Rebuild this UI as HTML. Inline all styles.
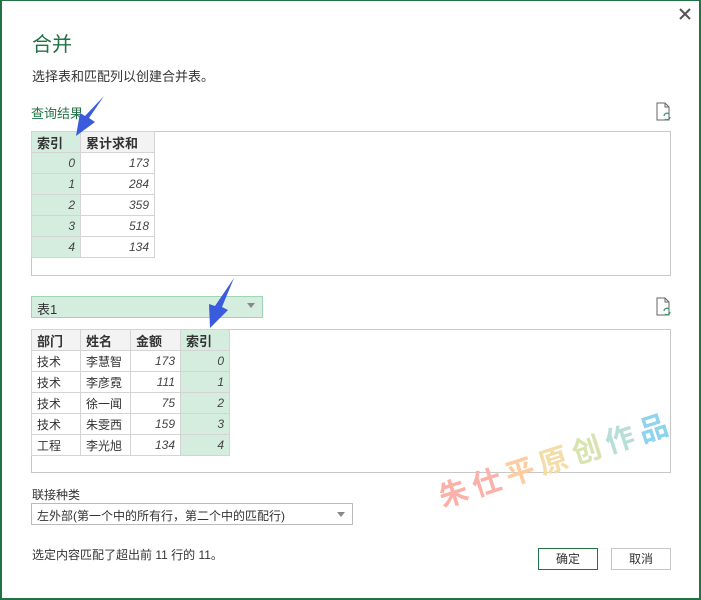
<!DOCTYPE html>
<html><head><meta charset="utf-8"><style>
*{margin:0;padding:0;box-sizing:border-box}
body{width:701px;height:600px;background:#fff;font-family:"Liberation Sans","Noto Sans CJK SC",sans-serif;font-size:12px;color:#333;position:relative;overflow:hidden}
.win{position:absolute;left:0;top:0;width:701px;height:600px;border:2px solid #217346;border-top-width:1px}
.a{position:absolute;white-space:nowrap}
table{border-collapse:collapse;position:absolute}
td{border:1px solid #d4d4d4;height:21px;padding:0 5px;font-size:12px}
th{border:1px solid #d4d4d4;height:21px;padding:0 5px;text-align:left;font-weight:bold;background:#f3f3f3;font-size:13px}
.g{background:#d5eddf}
.n{text-align:right;font-style:italic;color:#444}
.box{position:absolute;border:1px solid #c8c8c8}
.btn{position:absolute;height:22px;border:1px solid #c6c6c6;text-align:center;line-height:20px;font-size:12px}
</style></head><body>
<div class="win"></div>
<svg class="a" style="left:679px;top:8px" width="12" height="12"><path d="M1 1L11 11M11 1L1 11" stroke="#555" stroke-width="2"/></svg>
<div class="a" style="left:32px;top:28px;font-size:20px;color:#217346">合并</div>
<div class="a" style="left:32px;top:66px;font-size:13px">选择表和匹配列以创建合并表。</div>
<div class="a" style="left:31px;top:103px;font-size:13px;color:#217346">查询结果</div>
<svg class="a" style="left:655px;top:102px" width="20" height="20"><path d="M2 1h8l4 4v13H2z M10 1v4h4" fill="none" stroke="#666" stroke-width="1"/><path d="M9 14a3 3 0 0 1 5-2M15 15a3 3 0 0 1-5 2" fill="none" stroke="#3a9a6a" stroke-width="1.3"/></svg>
<svg class="a" style="left:655px;top:297px" width="20" height="20"><path d="M2 1h8l4 4v13H2z M10 1v4h4" fill="none" stroke="#666" stroke-width="1"/><path d="M9 14a3 3 0 0 1 5-2M15 15a3 3 0 0 1-5 2" fill="none" stroke="#3a9a6a" stroke-width="1.3"/></svg>
<div class="box" style="left:31px;top:131px;width:640px;height:145px"></div>
<table style="left:31px;top:131px">
<tr><th class="g" style="width:49px">索引</th><th style="width:74px">累计求和</th></tr>
<tr><td class="g n">0</td><td class="n">173</td></tr>
<tr><td class="g n">1</td><td class="n">284</td></tr>
<tr><td class="g n">2</td><td class="n">359</td></tr>
<tr><td class="g n">3</td><td class="n">518</td></tr>
<tr><td class="g n">4</td><td class="n">134</td></tr>
</table>
<div class="a" style="left:31px;top:296px;width:232px;height:22px;background:#d5eddf;border:1px solid #9fd5b5;padding:2px 5px;font-size:13px">表1</div>
<div class="a" style="left:247px;top:303px;width:0;height:0;border-left:4px solid transparent;border-right:4px solid transparent;border-top:5px solid #888"></div>
<div class="box" style="left:31px;top:329px;width:640px;height:144px"></div>
<table style="left:31px;top:329px">
<tr><th style="width:49px">部门</th><th style="width:50px">姓名</th><th style="width:50px">金额</th><th class="g" style="width:49px">索引</th></tr>
<tr><td>技术</td><td>李慧智</td><td class="n">173</td><td class="g n">0</td></tr>
<tr><td>技术</td><td>李彦霓</td><td class="n">111</td><td class="g n">1</td></tr>
<tr><td>技术</td><td>徐一闻</td><td class="n">75</td><td class="g n">2</td></tr>
<tr><td>技术</td><td>朱雯西</td><td class="n">159</td><td class="g n">3</td></tr>
<tr><td>工程</td><td>李光旭</td><td class="n">134</td><td class="g n">4</td></tr>
</table>
<div class="a" style="left:32px;top:486px;font-size:12px">联接种类</div>
<div class="a" style="left:31px;top:503px;width:322px;height:22px;border:1px solid #bbb;padding:3px 5px;font-size:12px">左外部(第一个中的所有行，第二个中的匹配行)</div>
<div class="a" style="left:337px;top:512px;width:0;height:0;border-left:4px solid transparent;border-right:4px solid transparent;border-top:5px solid #888"></div>
<div class="a" style="left:32px;top:546px;font-size:12px">选定内容匹配了超出前 11 行的 11。</div>
<div class="btn" style="left:538px;top:548px;width:60px;border-color:#217346">确定</div>
<div class="btn" style="left:611px;top:548px;width:60px">取消</div>
<div class="a" style="left:440px;top:484px;transform:rotate(-18deg);transform-origin:left center;font-size:29px;font-weight:bold;letter-spacing:6px;line-height:30px">
<span style="color:#fbb0a8">朱仕</span><span style="color:#fdcca0">平</span><span style="color:#f3dca5">原</span><span style="color:#d8e3b0">创</span><span style="color:#b8ded8">作</span><span style="color:#8fd4ee">品</span></div>
<svg class="a" style="left:0;top:0" width="701" height="600"><polygon points="104,96 89,118 95,122 76,136 80,113 85,116" fill="#3a5bdc"/><polygon points="234,278 222,307 228,310 210,328 209,304 215,306" fill="#3a5bdc"/></svg>
</body></html>
